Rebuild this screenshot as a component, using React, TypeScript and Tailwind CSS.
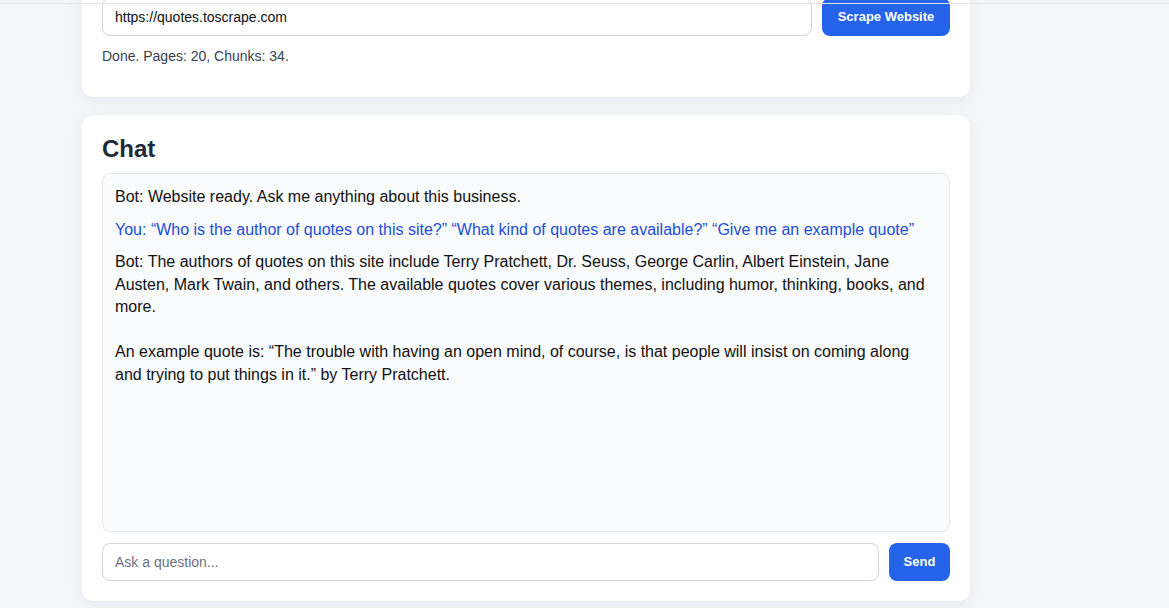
import { useState } from 'react';

type Message = {
  role: 'bot' | 'user';
  text: string;
};

const MESSAGES: Message[] = [
  { role: 'bot', text: 'Website ready. Ask me anything about this business.' },
  {
    role: 'user',
    text: '\u201CWho is the author of quotes on this site?\u201D \u201CWhat kind of quotes are available?\u201D \u201CGive me an example quote\u201D',
  },
  {
    role: 'bot',
    text: 'The authors of quotes on this site include Terry Pratchett, Dr. Seuss, George Carlin, Albert Einstein, Jane Austen, Mark Twain, and others. The available quotes cover various themes, including humor, thinking, books, and more.\n\nAn example quote is: \u201CThe trouble with having an open mind, of course, is that people will insist on coming along and trying to put things in it.\u201D by Terry Pratchett.',
  },
];

export default function App() {
  const [url, setUrl] = useState('https://quotes.toscrape.com');
  const [question, setQuestion] = useState('');

  return (
    <div
      className="min-h-screen bg-[#f5f6fa] text-[#111827]"
      style={{ fontFamily: '"Liberation Sans", Arial, sans-serif' }}
    >
      {/* thin top bar edge */}
      <div className="fixed inset-x-0 top-0 z-10 h-[4px] border-b border-[#e2e3e7]" />

      <div className="ml-[82px] w-[888px] pb-[8px]">
        {/* Scrape card (scrolled partly out of view) */}
        <section className="-mt-[22px] rounded-xl bg-white px-5 pt-5 pb-[31px] shadow-[0_4px_16px_rgba(15,23,42,0.06)]">
          <div className="flex gap-[10px]">
            <input
              value={url}
              onChange={(e) => setUrl(e.target.value)}
              className="h-[38px] flex-1 rounded-lg border border-[#d1d5db] bg-white px-3 text-[14px] text-[#111] outline-none"
            />
            <button
              type="button"
              className="h-[38px] w-[128px] rounded-lg bg-[#2563eb] text-[13px] font-bold text-white"
            >
              Scrape Website
            </button>
          </div>
          <p className="mt-[10px] text-[14px] leading-5 text-[#374151]">
            Done. Pages: 20, Chunks: 34.
          </p>
        </section>

        {/* Chat card */}
        <section className="mt-[18px] rounded-xl bg-white px-5 pt-5 pb-5 shadow-[0_4px_16px_rgba(15,23,42,0.06)]">
          <h2 className="mb-[11px] text-[24px] leading-[27px] font-bold text-[#1f2937]">Chat</h2>
          <div className="h-[359px] overflow-y-auto rounded-lg border border-[#e5e7eb] bg-[#fafbfd] px-3 pt-[12px]">
            {MESSAGES.map((m, i) => (
              <p
                key={i}
                className={`mb-[10px] text-[16px] leading-[22.5px] whitespace-pre-wrap ${
                  m.role === 'user' ? 'text-[#1d4ed8]' : 'text-[#111]'
                }`}
              >
                {m.role === 'user' ? 'You: ' : 'Bot: '}
                {m.text}
              </p>
            ))}
          </div>
          <div className="mt-[11px] flex gap-[10px]">
            <input
              value={question}
              onChange={(e) => setQuestion(e.target.value)}
              placeholder="Ask a question..."
              className="h-[38px] flex-1 rounded-lg border border-[#d1d5db] bg-white px-3 text-[14px] text-[#111] outline-none placeholder:text-[#6b7280]"
            />
            <button
              type="button"
              className="h-[38px] w-[61px] rounded-lg bg-[#2563eb] text-[13px] font-bold text-white"
            >
              Send
            </button>
          </div>
        </section>
      </div>
    </div>
  );
}
